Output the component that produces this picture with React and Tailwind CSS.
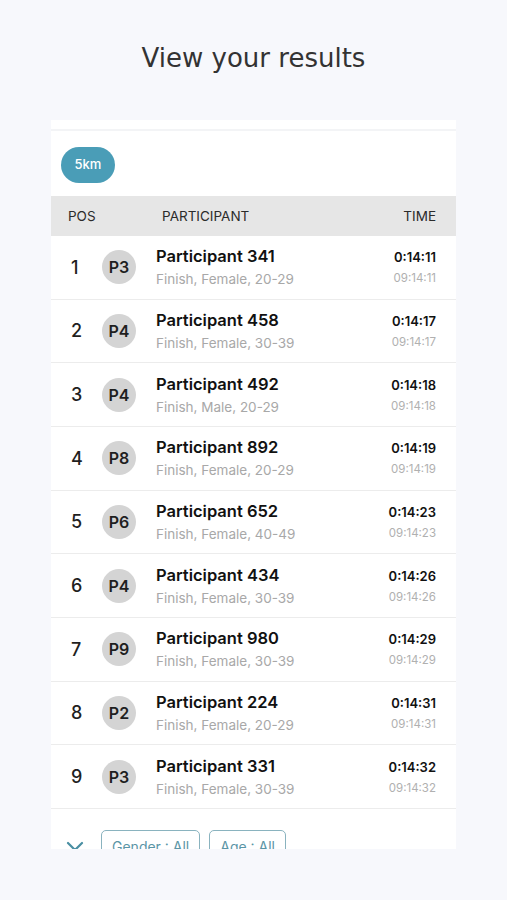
import React from 'react';

const results = [
  { pos: 1, badge: 'P3', name: 'Participant 341', info: 'Finish, Female, 20-29', time: '0:14:11', clock: '09:14:11' },
  { pos: 2, badge: 'P4', name: 'Participant 458', info: 'Finish, Female, 30-39', time: '0:14:17', clock: '09:14:17' },
  { pos: 3, badge: 'P4', name: 'Participant 492', info: 'Finish, Male, 20-29', time: '0:14:18', clock: '09:14:18' },
  { pos: 4, badge: 'P8', name: 'Participant 892', info: 'Finish, Female, 20-29', time: '0:14:19', clock: '09:14:19' },
  { pos: 5, badge: 'P6', name: 'Participant 652', info: 'Finish, Female, 40-49', time: '0:14:23', clock: '09:14:23' },
  { pos: 6, badge: 'P4', name: 'Participant 434', info: 'Finish, Female, 30-39', time: '0:14:26', clock: '09:14:26' },
  { pos: 7, badge: 'P9', name: 'Participant 980', info: 'Finish, Female, 30-39', time: '0:14:29', clock: '09:14:29' },
  { pos: 8, badge: 'P2', name: 'Participant 224', info: 'Finish, Female, 20-29', time: '0:14:31', clock: '09:14:31' },
  { pos: 9, badge: 'P3', name: 'Participant 331', info: 'Finish, Female, 30-39', time: '0:14:32', clock: '09:14:32' },
];

const App = () => {
  return (
    <div className="min-h-[900px] w-[507px] bg-[#f7f8fc] font-['Inter',sans-serif]">
      <h1 className="pt-[38px] text-center font-['DejaVu_Sans',sans-serif] text-[26px] leading-[40px] text-[#333]">
        View your results
      </h1>

      <div className="mx-[51px] mt-[42px] h-[729px] overflow-hidden bg-white">
        <div className="h-[9px] bg-white"></div>
        <div className="h-[2px] bg-[#f3f4f6]"></div>

        <div className="px-[10px] pb-[13px] pt-[16px]">
          <span className="inline-flex h-[36px] w-[54px] items-center justify-center rounded-full bg-[#4a9db7] text-[13px] font-medium text-white">
            5km
          </span>
        </div>

        <div className="flex h-[40px] items-center bg-[#e6e6e6] pr-[20px] text-[13.5px] text-[#2b2b2b]">
          <span className="w-[111px] pl-[17px]">POS</span>
          <span className="flex-1">PARTICIPANT</span>
          <span>TIME</span>
        </div>

        {results.map((r) => (
          <div key={r.pos} className="flex h-[63.67px] items-center border-b border-[#ececec] pr-[20px]">
            <span className="w-[51px] pl-[20px] text-[18px] font-medium text-[#1f1f1f]">{r.pos}</span>
            <span className="flex h-[34px] w-[34px] items-center justify-center rounded-full bg-[#d4d4d4] text-[16px] font-semibold text-[#1f1f1f]">
              {r.badge}
            </span>
            <div className="ml-[20px] flex-1">
              <div className="text-[16.5px] font-semibold leading-[20px] text-[#111]">{r.name}</div>
              <div className="mt-[4px] text-[13.5px] leading-[18px] text-[#a8a8a8]">{r.info}</div>
            </div>
            <div className="text-right">
              <div className="text-[13px] font-semibold leading-[18px] text-[#111]">{r.time}</div>
              <div className="mt-[4px] text-[11.5px] leading-[16px] text-[#b0b0b0]">{r.clock}</div>
            </div>
          </div>
        ))}

        <div className="flex items-start gap-[9px] pl-[15px] pt-[21px]">
          <svg width="18" height="12" viewBox="0 0 18 12" className="mr-[8px] mt-[11px]">
            <path d="M2 2 L9 9 L16 2" fill="none" stroke="#4a8fa3" strokeWidth="2.2" strokeLinecap="round" strokeLinejoin="round" />
          </svg>
          <span className="rounded-[5px] border border-[#8ab3bf] px-[10px] py-[6px] text-[14px] leading-[20px] text-[#5b95a6]">Gender : All</span>
          <span className="rounded-[5px] border border-[#8ab3bf] px-[10px] py-[6px] text-[14px] leading-[20px] text-[#5b95a6]">Age : All</span>
        </div>
      </div>
    </div>
  );
};

export default App;
